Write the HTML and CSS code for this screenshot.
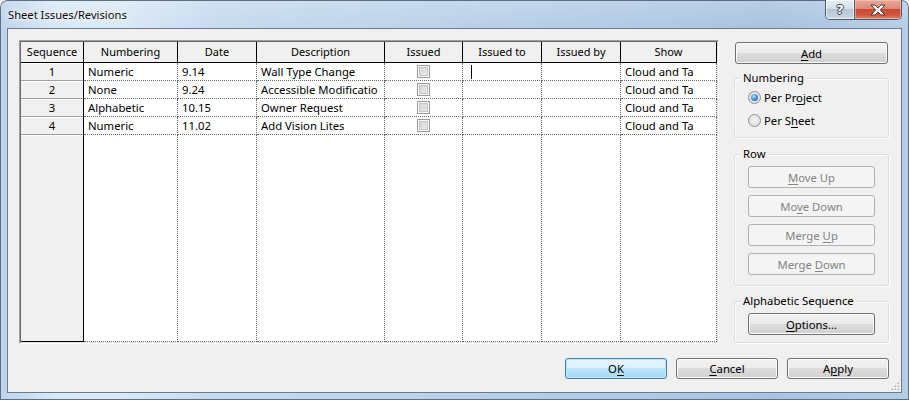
FILE: index.html
```html
<!DOCTYPE html>
<html>
<head>
<meta charset="utf-8">
<title>Sheet Issues/Revisions</title>
<link rel="stylesheet" href="styles.css">
</head>
<body>
<div class="window">
  <div class="titlebar">
    <span class="title">Sheet Issues/Revisions</span>
    <div class="caps">
      <div class="cap help"><span>?</span></div>
      <div class="cap close">
        <svg width="16" height="12" viewBox="0 0 16 12"><path d="M1 1 H5 L8 4 L11 1 H15 L10.3 6 L15 11 H11 L8 8 L5 11 H1 L5.7 6 Z" fill="#fff" stroke="#4a3a36" stroke-width="1" stroke-linejoin="round"/></svg>
      </div>
    </div>
  </div>
  <div class="client">
    <div class="main">
      <div class="grid">
        <div class="grid-inner">
          <div class="row head">
            <div class="cell">Sequence</div>
            <div class="cell">Numbering</div>
            <div class="cell">Date</div>
            <div class="cell">Description</div>
            <div class="cell">Issued</div>
            <div class="cell">Issued to</div>
            <div class="cell">Issued by</div>
            <div class="cell">Show</div>
          </div>
          <div class="row">
            <div class="cell seq">1</div>
            <div class="cell">Numeric</div>
            <div class="cell">9.14</div>
            <div class="cell">Wall Type Change</div>
            <div class="cell chkcell"><span class="chk"></span></div>
            <div class="cell edit"><span class="caret"></span></div>
            <div class="cell"></div>
            <div class="cell">Cloud and Ta</div>
          </div>
          <div class="row">
            <div class="cell seq">2</div>
            <div class="cell">None</div>
            <div class="cell">9.24</div>
            <div class="cell">Accessible Modificatio</div>
            <div class="cell chkcell"><span class="chk"></span></div>
            <div class="cell"></div>
            <div class="cell"></div>
            <div class="cell">Cloud and Ta</div>
          </div>
          <div class="row">
            <div class="cell seq">3</div>
            <div class="cell">Alphabetic</div>
            <div class="cell">10.15</div>
            <div class="cell">Owner Request</div>
            <div class="cell chkcell"><span class="chk"></span></div>
            <div class="cell"></div>
            <div class="cell"></div>
            <div class="cell">Cloud and Ta</div>
          </div>
          <div class="row">
            <div class="cell seq">4</div>
            <div class="cell">Numeric</div>
            <div class="cell">11.02</div>
            <div class="cell">Add Vision Lites</div>
            <div class="cell chkcell"><span class="chk"></span></div>
            <div class="cell"></div>
            <div class="cell"></div>
            <div class="cell">Cloud and Ta</div>
          </div>
          <div class="row filler">
            <div class="cell seq"></div>
            <div class="cell"></div>
            <div class="cell"></div>
            <div class="cell"></div>
            <div class="cell"></div>
            <div class="cell"></div>
            <div class="cell"></div>
            <div class="cell"></div>
          </div>
        </div>
      </div>
      <div class="side">
        <div class="btn add"><span><u>A</u>dd</span></div>
        <div class="group numbering">
          <span class="legend">Numbering</span>
          <div class="radio-row"><span class="radio on"></span><span>Per Pr<u>o</u>ject</span></div>
          <div class="radio-row"><span class="radio"></span><span>Per S<u>h</u>eet</span></div>
        </div>
        <div class="group rowgroup">
          <span class="legend">Row</span>
          <div class="btn dis"><span><u>M</u>ove Up</span></div>
          <div class="btn dis"><span>Mo<u>v</u>e Down</span></div>
          <div class="btn dis"><span>Merge <u>U</u>p</span></div>
          <div class="btn dis"><span>Merge <u>D</u>own</span></div>
        </div>
        <div class="group alpha">
          <span class="legend">Alphabetic Sequence</span>
          <div class="btn wide"><span><u>O</u>ptions...</span></div>
        </div>
      </div>
    </div>
    <div class="footer">
      <div class="btn foot default"><span>O<u>K</u></span></div>
      <div class="btn foot"><span><u>C</u>ancel</span></div>
      <div class="btn foot"><span>A<u>p</u>ply</span></div>
    </div>
    <svg class="grip" width="10" height="10" viewBox="0 0 10 10">
      <rect x="7" y="1" width="2" height="2" fill="#bcbcbc"/>
      <rect x="4" y="4" width="2" height="2" fill="#bcbcbc"/>
      <rect x="7" y="4" width="2" height="2" fill="#bcbcbc"/>
      <rect x="1" y="7" width="2" height="2" fill="#bcbcbc"/>
      <rect x="4" y="7" width="2" height="2" fill="#bcbcbc"/>
      <rect x="7" y="7" width="2" height="2" fill="#bcbcbc"/>
      <rect x="7" y="1" width="1" height="1" fill="#fff"/>
      <rect x="4" y="4" width="1" height="1" fill="#fff"/>
      <rect x="7" y="4" width="1" height="1" fill="#fff"/>
      <rect x="1" y="7" width="1" height="1" fill="#fff"/>
      <rect x="4" y="7" width="1" height="1" fill="#fff"/>
      <rect x="7" y="7" width="1" height="1" fill="#fff"/>
    </svg>
  </div>
</div>
</body>
</html>
```
FILE: styles.css
```css
* { box-sizing: border-box; }
html, body { margin: 0; padding: 0; }
body {
  width: 909px;
  height: 400px;
  overflow: hidden;
  font-family: "Noto Sans", "Open Sans", sans-serif;
  font-size: 11.3px;
  color: #000;
  background: #ffffff;
}
u { text-decoration: underline; text-underline-offset: 2px; }

.window {
  width: 909px;
  height: 400px;
  display: flex;
  flex-direction: column;
  padding: 0 7px 7px;
  border-radius: 7px 7px 0 0;
  background:
    linear-gradient(to bottom, rgba(255,255,255,0.18), rgba(255,255,255,0) 28px),
    linear-gradient(to right, #bdd3ea 0%, #d9e8f6 6%, #dbe9f6 13%, #c6daee 24%, #bcd3ea 45%, #b3cbe6 65%, #a9c3e0 85%, #b6cde6 100%);
  box-shadow: inset 0 0 0 1px #5d6f84;
}

.titlebar {
  height: 28px;
  display: flex;
  justify-content: space-between;
  align-items: flex-start;
  flex: none;
}
.title {
  padding: 7px 0 0 1px;
  line-height: 15px;
  font-size: 11.2px;
  color: #0a0a0a;
  text-shadow: 0 0 5px #fff, 0 0 9px rgba(255,255,255,0.9), 0 0 14px rgba(255,255,255,0.8);
}
.caps {
  display: flex;
  height: 20px;
  border: 1px solid #4d5b6d;
  border-top: none;
  border-radius: 0 0 5px 5px;
  overflow: hidden;
}
.cap {
  display: flex;
  align-items: center;
  justify-content: center;
  height: 100%;
}
.help {
  width: 29px;
  border-right: 1px solid #4d5b6d;
  background: linear-gradient(#e6edf4, #d6e0ea 45%, #b7c5d5 50%, #c4d1de 85%, #d3dde8 100%);
  box-shadow: inset 0 0 0 1px rgba(255,255,255,0.55);
}
.help span {
  font-family: "DejaVu Sans", sans-serif;
  font-weight: bold;
  font-size: 13px;
  line-height: 14px;
  color: #fff;
  text-shadow: -1px 0 #3a3f46, 1px 0 #3a3f46, 0 -1px #3a3f46, 0 1px #3a3f46;
}
.close {
  width: 46px;
  background: linear-gradient(#eaa797, #dc8b78 45%, #c84a32 50%, #d2563c 80%, #e6896a 100%);
  box-shadow: inset 0 0 0 1px rgba(255,220,210,0.45);
}

.client {
  flex: 1;
  position: relative;
  display: flex;
  flex-direction: column;
  padding: 11px 12px 13px 11px;
  background: #f0f0f0;
  border: 1px solid #6c7b8d;
}
.main {
  display: flex;
  gap: 15px;
  height: 304px;
  flex: none;
}

/* grid */
.grid {
  width: 700px;
  height: 304px;
  border: 1px solid;
  border-color: #a0a0a0 #ffffff #ffffff #a0a0a0;
}
.grid-inner {
  height: 100%;
  display: flex;
  flex-direction: column;
  background: #fff;
  border: 1px solid;
  border-color: #696969 #e3e3e3 #e3e3e3 #696969;
}
.row {
  display: grid;
  grid-template-columns: 63px 94px 79px 128px 78px 79px 79px 96px;
  height: 18px;
  flex: none;
}
.cell {
  border-right: 1px dotted #6a6a6a;
  border-bottom: 1px dotted #6a6a6a;
  padding: 0 4px;
  line-height: 17px;
  white-space: nowrap;
  overflow: hidden;
}
.head { height: 21px; }
.head .cell {
  background: #f0f0f0;
  border-right: 1px solid #000;
  border-bottom: 1px solid #000;
  text-align: center;
  line-height: 20px;
  padding: 0;
  font-size: 11px;
}
.seq {
  background: #f0f0f0;
  border-right: 1px solid #000;
  border-bottom: 1px solid #a0a0a0;
  box-shadow: inset 0 1px 0 #ffffff;
  text-align: center;
  padding: 0;
}
.filler { flex: 1; height: auto; }
.filler .seq { border-bottom: 1px solid #000; }

.chkcell {
  display: flex;
  align-items: center;
  justify-content: center;
  padding: 0 1px 0 0;
}
.chk {
  width: 13px;
  height: 13px;
  border: 1px solid #9c9c9c;
  background: linear-gradient(135deg, #d0d0d0, #eeeeee);
  box-shadow: inset 0 0 0 1px #f6f6f6, inset 0 0 0 2px #c6c6c6;
}
.edit {
  display: flex;
  align-items: center;
  padding-left: 8px;
}
.caret {
  width: 1px;
  height: 14px;
  background: #000;
}

/* side panel */
.side {
  width: 155px;
  display: flex;
  flex-direction: column;
}
.btn {
  height: 22px;
  display: flex;
  align-items: center;
  justify-content: center;
  border: 1px solid #707070;
  border-radius: 3px;
  background: linear-gradient(#f2f2f2, #ebebeb 50%, #dddddd 50%, #cfcfcf);
  box-shadow: inset 0 0 0 1px #fbfbfb;
  color: #000;
  line-height: 15px;
}
.add { margin: 2px 1px 0; }
.btn.dis {
  width: 127px;
  border-color: #adb2b5;
  background: #f4f4f4;
  box-shadow: none;
  color: #838383;
}
.btn.wide { width: 127px; }

.group {
  position: relative;
  border: 1px solid #d5dfe5;
  border-radius: 3px;
  box-shadow: 1px 1px 0 #fdfdfd, inset 1px 1px 0 #fdfdfd;
}
.legend {
  position: absolute;
  top: -9px;
  left: 6px;
  padding: 0 2px;
  line-height: 16px;
  background: #f0f0f0;
}
.numbering {
  margin-top: 14px;
  height: 60px;
  padding: 9px 0 0 13px;
  display: flex;
  flex-direction: column;
  gap: 5px;
}
.radio-row {
  display: flex;
  align-items: center;
  gap: 3px;
  height: 18px;
}
.radio {
  width: 13px;
  height: 13px;
  border-radius: 50%;
  border: 1px solid #8e8f8f;
  background: radial-gradient(circle at 50% 45%, #f4f4f4, #e2e2e2 60%, #cfcfcf);
  display: flex;
  align-items: center;
  justify-content: center;
}
.radio.on::after {
  content: "";
  width: 7px;
  height: 7px;
  border-radius: 50%;
  background: radial-gradient(circle at 40% 35%, #a6e2ff, #3a8ad6 55%, #1b4f8e);
}
.rowgroup {
  margin-top: 16px;
  height: 132px;
  padding-top: 11px;
  display: flex;
  flex-direction: column;
  align-items: center;
  gap: 7px;
}
.alpha {
  margin-top: 15px;
  height: 42px;
  padding-top: 11px;
  display: flex;
  flex-direction: column;
  align-items: center;
}

/* footer */
.footer {
  display: flex;
  justify-content: flex-end;
  gap: 9px;
  margin-top: 14px;
}
.btn.foot {
  width: 102px;
  height: 21px;
}
.btn.default {
  border-color: #3c7fb1;
  background: linear-gradient(#eaf6fd, #d9f0fc 50%, #bee6fd 50%, #a7d9f5);
  box-shadow: inset 0 0 0 1px #c4e5f6;
}
.grip {
  position: absolute;
  right: 1px;
  bottom: 1px;
}
```
